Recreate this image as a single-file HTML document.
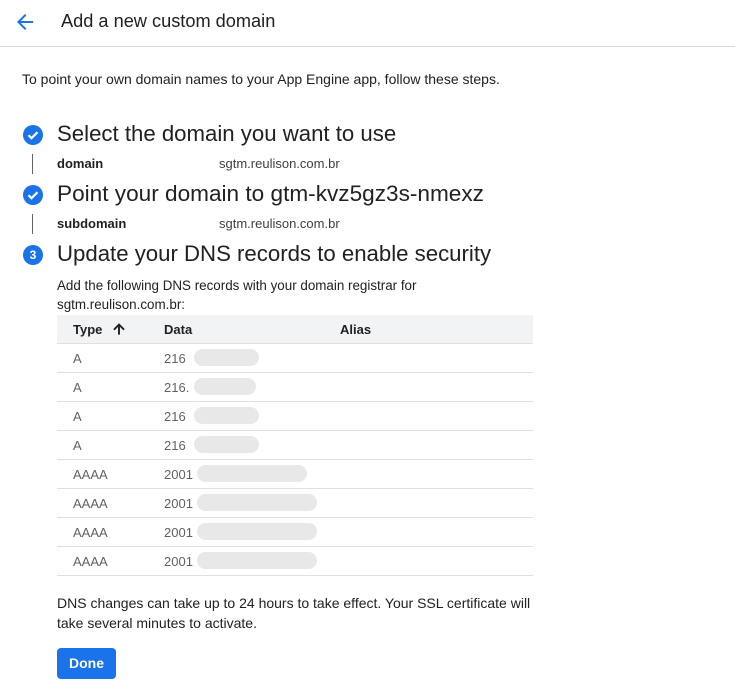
<!DOCTYPE html><html><head><style>
body{margin:0;width:735px;height:695px;background:#fff;font-family:"Liberation Sans",Arial,sans-serif;color:#202124;position:relative;overflow:hidden}
.a{position:absolute;white-space:nowrap}
.hdr{left:0;top:0;width:735px;height:46px;border-bottom:1px solid #dadce0}
.step{font-size:22.2px;color:#202124}
.ic{width:20px;height:20px;border-radius:50%;background:#1a73e8;color:#fff;font-size:12px;font-weight:bold;text-align:center;line-height:20px}
.lbl{font-size:13px;font-weight:bold}
.val{font-size:13px;color:#3c4043}
.vl{width:1px;height:20px;background:#5f6368}
.row{left:57px;width:476px;height:28px;border-bottom:1px solid #e0e0e0;font-size:13px;color:#5f6368}
.row span{position:absolute;top:7px}
.blur{position:absolute;height:17px;border-radius:9px;background:#e8e8e8;top:5px}
</style></head><body>
<div class="a hdr"></div>
<svg class="a" style="left:13px;top:10px" width="24" height="24" viewBox="0 0 24 24"><path d="M20 11H7.83l5.59-5.59L12 4l-8 8 8 8 1.41-1.41L7.83 13H20z" fill="#1a73e8"/></svg>
<div class="a" style="left:61px;top:11px;font-size:18.2px">Add a new custom domain</div>
<div class="a" style="left:22px;top:71px;font-size:14px">To point your own domain names to your App Engine app, follow these steps.</div>

<div class="a ic" style="left:23px;top:125px"><svg width="20" height="20" viewBox="0 0 20 20"><path d="M5.5 10.2l3 3 6-6" stroke="#fff" stroke-width="2.2" fill="none"/></svg></div>
<div class="a step" style="left:57px;top:121px">Select the domain you want to use</div>
<div class="a vl" style="left:32px;top:154px"></div>
<div class="a lbl" style="left:57px;top:156px">domain</div>
<div class="a val" style="left:219px;top:156px">sgtm.reulison.com.br</div>

<div class="a ic" style="left:23px;top:185px"><svg width="20" height="20" viewBox="0 0 20 20"><path d="M5.5 10.2l3 3 6-6" stroke="#fff" stroke-width="2.2" fill="none"/></svg></div>
<div class="a step" style="left:57px;top:181px;font-size:22.6px">Point your domain to gtm-kvz5gz3s-nmexz</div>
<div class="a vl" style="left:32px;top:214px"></div>
<div class="a lbl" style="left:57px;top:216px">subdomain</div>
<div class="a val" style="left:219px;top:216px">sgtm.reulison.com.br</div>

<div class="a ic" style="left:23px;top:245px">3</div>
<div class="a step" style="left:57px;top:241px">Update your DNS records to enable security</div>
<div class="a" style="left:57px;top:276px;font-size:13.4px;line-height:19px">Add the following DNS records with your domain registrar for<br>sgtm.reulison.com.br:</div>

<div class="a" style="left:57px;top:315px;width:476px;height:28px;background:#f1f3f4;border-bottom:1px solid #e0e0e0;font-size:13px;font-weight:bold">
<span style="position:absolute;left:16px;top:7px">Type</span>
<svg style="position:absolute;left:54px;top:6px" width="16" height="16" viewBox="0 0 24 24"><path d="M4 12l1.41 1.41L11 7.83V20h2V7.83l5.58 5.59L20 12l-8-8z" fill="#202124" stroke="#202124" stroke-width="0.8"/></svg>
<span style="position:absolute;left:107px;top:7px">Data</span>
<span style="position:absolute;left:283px;top:7px">Alias</span></div>

<div class="a row" style="top:344px"><span style="left:16px">A</span><span style="left:107px">216</span><div class="blur" style="left:137px;width:65px"></div></div>
<div class="a row" style="top:373px"><span style="left:16px">A</span><span style="left:107px">216.</span><div class="blur" style="left:137px;width:62px"></div></div>
<div class="a row" style="top:402px"><span style="left:16px">A</span><span style="left:107px">216</span><div class="blur" style="left:137px;width:65px"></div></div>
<div class="a row" style="top:431px"><span style="left:16px">A</span><span style="left:107px">216</span><div class="blur" style="left:137px;width:65px"></div></div>
<div class="a row" style="top:460px"><span style="left:16px">AAAA</span><span style="left:107px">2001</span><div class="blur" style="left:140px;width:110px"></div></div>
<div class="a row" style="top:489px"><span style="left:16px">AAAA</span><span style="left:107px">2001</span><div class="blur" style="left:140px;width:120px"></div></div>
<div class="a row" style="top:518px"><span style="left:16px">AAAA</span><span style="left:107px">2001</span><div class="blur" style="left:140px;width:120px"></div></div>
<div class="a row" style="top:547px"><span style="left:16px">AAAA</span><span style="left:107px">2001</span><div class="blur" style="left:140px;width:120px"></div></div>

<div class="a" style="left:57px;top:593px;font-size:14px;line-height:20px">DNS changes can take up to 24 hours to take effect. Your SSL certificate will<br>take several minutes to activate.</div>
<div class="a" style="left:57px;top:648px;width:59px;height:31px;background:#1a73e8;border-radius:4px;color:#fff;font-size:14px;font-weight:bold;text-align:center;line-height:31px">Done</div>
</body></html>
